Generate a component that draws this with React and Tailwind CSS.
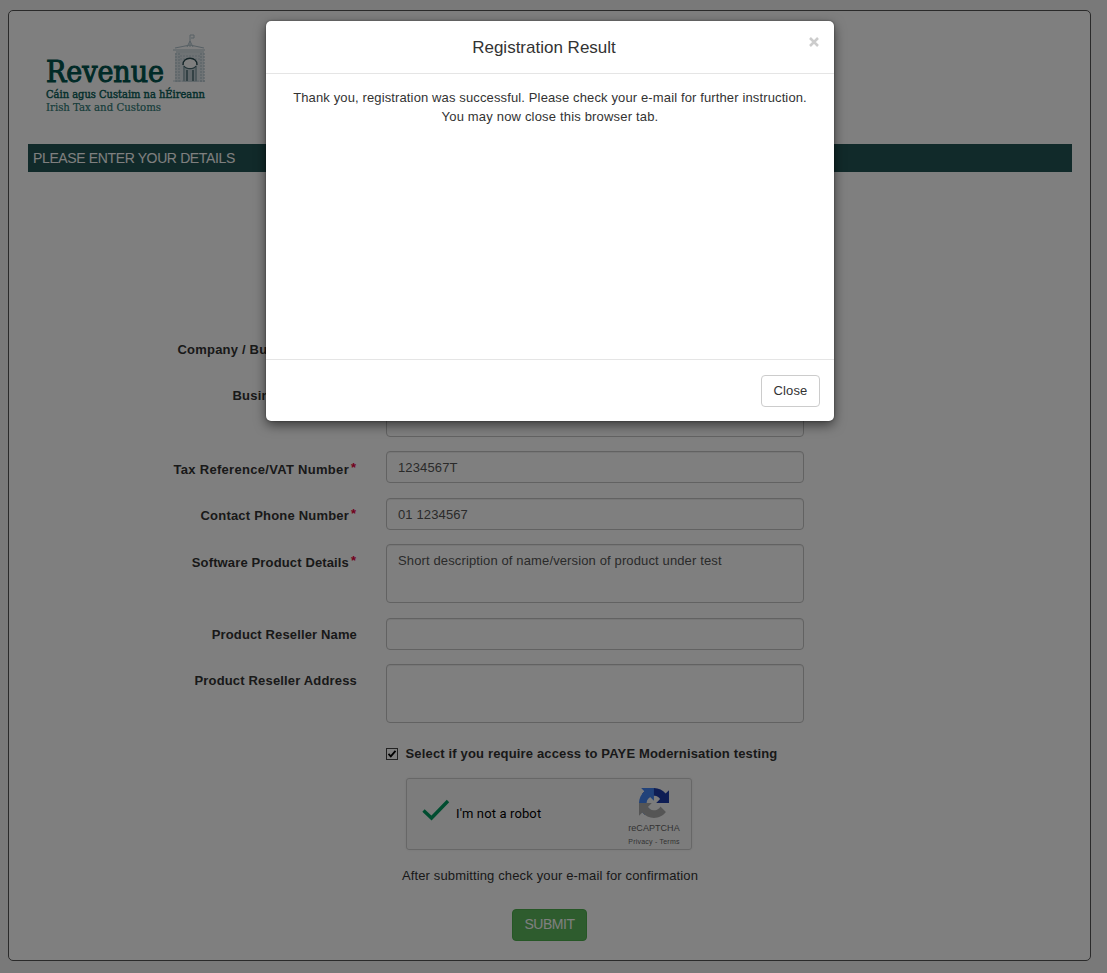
import React from "react";

function Logo() {
  return (
    <svg width="170" height="84" viewBox="0 0 170 84" className="block overflow-visible" aria-label="Revenue">
      <g fontFamily="'DejaVu Serif Condensed', 'DejaVu Serif', serif">
        <text x="0" y="48" fontSize="29" fill="#00554e" stroke="#00554e" strokeWidth="1" textLength="118" lengthAdjust="spacingAndGlyphs">Revenue</text>
        <text x="0" y="64" fontSize="11.5" fill="#0b5f5a" stroke="#0b5f5a" strokeWidth="0.45" textLength="159" lengthAdjust="spacingAndGlyphs">Cáin agus Custaim na hÉireann</text>
        <text x="0" y="77" fontSize="11.5" fill="#2f7a76" stroke="#2f7a76" strokeWidth="0.2" textLength="115" lengthAdjust="spacingAndGlyphs">Irish Tax and Customs</text>
      </g>
      <g fill="none" stroke="#b0c2cb">
        <path d="M129 19h29v29h-29z" fill="#d2dde2" fillOpacity="0.7" stroke="none" />
        <path d="M144 13V1h4v3h-3M141 13l3-6 3 6" />
        <path d="M127 16h32M129 14l15-3 14 3M130 18h28" strokeWidth="1.2" />
        <path d="M130 19v29M133 19v29M155 19v29M158 19v29" strokeDasharray="2 1" strokeWidth="1.1" />
        <path d="M134 22h21M134 25h21M127 47h10M151 47h9" strokeDasharray="2 1" strokeWidth="0.8" />
        <path d="M137 29h14v19h-14z" fill="#c3d0d6" stroke="none" />
        <path d="M138 47V32M150 47V32" stroke="#8ea5ad" strokeWidth="1.4" />
        <path d="M141 47V36M147 47V36" stroke="#5f7d84" strokeWidth="1.8" />
        <ellipse cx="144" cy="29.5" rx="6.5" ry="4.500" fill="#fff" stroke="none" />
        <path d="M137 31c-1-9 15-9 14 0" stroke="#28484f" strokeWidth="1.4" />
        <path d="M138 32c2 3.500 10 3.500 12 0" stroke="#48686f" strokeWidth="1.1" />
      </g>
    </svg>
  );
}

function RecaptchaMark() {
  return (
    <svg width="30" height="30" viewBox="0 0 64 64" className="block">
      <path fill="#1c3aa9" d="M64 31.955l-.033-1.37V4.687l-7.16 7.16C50.948 4.674 42.033.093 32.05.093c-10.4 0-19.622 4.96-25.458 12.64l11.736 11.86a15.55 15.55 0 0 1 4.754-5.334c2.05-1.6 4.952-2.906 8.968-2.906.485 0 .86.057 1.135.163 4.976.393 9.288 3.14 11.828 7.124l-8.307 8.307L64 31.953" />
      <path fill="#4285f4" d="M31.862.094l-1.37.033H4.594l7.16 7.16C4.58 13.147 0 22.06 0 32.046c0 10.4 4.96 19.622 12.64 25.458L24.5 45.768a15.55 15.55 0 0 1-5.334-4.754c-1.6-2.05-2.906-4.952-2.906-8.968 0-.485.057-.86.163-1.135.393-4.976 3.14-9.288 7.124-11.828l8.307 8.307L31.86.095" />
      <path fill="#ababab" d="M.001 32.045l.033 1.37v25.898l7.16-7.16c5.86 7.173 14.774 11.754 24.76 11.754 10.4 0 19.622-4.96 25.458-12.64l-11.736-11.86a15.55 15.55 0 0 1-4.754 5.334c-2.05 1.6-4.952 2.906-8.968 2.906-.485 0-.86-.057-1.135-.163-4.976-.393-9.288-3.14-11.828-7.124l8.307-8.307c-10.522.04-22.4.066-27.295-.005" />
    </svg>
  );
}

function Field({ label, required, value, tall, labelClass = "pt-[8px] tracking-[0.17px]" }) {
  return (
    <div className="flex items-start gap-[29px]">
      <div
        className={
          "flex w-[329px] justify-end whitespace-nowrap text-[13px] font-bold leading-[18px] " +
          labelClass
        }
      >
        {label}
        {required && <span className="-mt-[2px] ml-[2px] w-[6px] text-[#e6003c]">*</span>}
      </div>
      <div
        className={
          "w-[418px] rounded-[4px] border border-[#c4c4c4] px-[11px] py-[6px] text-[13px] leading-[19px] tracking-[0.13px] text-[#555] shadow-[inset_0_1px_1px_rgba(0,0,0,0.075)] " +
          (tall ? "h-[59px]" : "h-8")
        }
      >
        {value}
      </div>
    </div>
  );
}

export default function App() {
  return (
    <div className="relative h-[973px] w-[1107px] overflow-hidden bg-[#f3f3f3] pl-2 pt-[10px] font-['Liberation_Sans',Arial,sans-serif] text-[13px] text-[#333]">
      <main className="flex h-[951px] w-[1083px] flex-col rounded-[5px] border border-[#555] bg-white pl-[19px] pr-[18px]">
        <header className="flex h-[133px] shrink-0 pl-[18px] pt-[23px]">
          <Logo />
        </header>
        <div className="h-7 shrink-0 bg-[#225454] pl-[5px] text-[14px] leading-7 tracking-[-0.37px] text-white">PLEASE ENTER YOUR DETAILS</div>

        <form className="mt-[159.6px] flex flex-col">
          <div className="flex flex-col gap-[14.4px]">
            <Field label="Company / Business Name" required labelClass="pt-[9px] tracking-[0.2px]" />
            <Field label="Business Address" required tall labelClass="pt-[9px] tracking-[0.22px]" />
            <Field label="Tax Reference/VAT Number" required value="1234567T" labelClass="pt-[10px] tracking-[0.3px]" />
            <Field label="Contact Phone Number" required value="01 1234567" labelClass="pt-[9px] tracking-[0.2px]" />
            <Field label="Software Product Details" required tall value="Short description of name/version of product under test" labelClass="pt-[10px] tracking-[0.14px]" />
            <Field label="Product Reseller Name" labelClass="pt-[8px] tracking-[0.14px]" />
            <Field label="Product Reseller Address" tall />
          </div>

          <div className="mt-5 flex h-5 items-center gap-[7.5px] pl-[358px] pt-px font-bold tracking-[0.16px]">
            <svg width="12" height="12" viewBox="0 0 12 12" className="mt-px block">
              <rect x="0.5" y="0.5" width="11" height="11" fill="#fff" stroke="#444" />
              <path d="M2.5 5.8l2.3 2.5 4.7-5.5" fill="none" stroke="#000" strokeWidth="1.8" />
            </svg>
            <span className="mt-px">Select if you require access to PAYE Modernisation testing</span>
          </div>

          <div className="ml-[378px] mt-[15px] flex h-[72px] w-[286px] rounded-[3px] border border-[#cfcfcf] bg-[#f9f9f9] text-black shadow-[0_0_3px_rgba(0,0,0,0.08)]">
            <div className="flex flex-1 items-center pl-[15px]">
              <svg width="28" height="22" viewBox="0 0 28 22" className="-mt-[7px] block">
                <path d="M1.500 11.500l8 7.500L26 2" fill="none" stroke="#009a60" strokeWidth="3.400" />
              </svg>
              <span className="ml-[6px] font-[Roboto,sans-serif] text-[13px] tracking-[0.13px]">I&apos;m not a robot</span>
            </div>
            <div className="flex w-[74px] flex-col items-center pt-[9px] text-[#666]">
              <RecaptchaMark />
              <div className="mt-1 text-[9px] leading-[13px] tracking-[0.05px]">reCAPTCHA</div>
              <div className="whitespace-nowrap text-[7px] leading-[13px] tracking-[0.22px]">Privacy - Terms</div>
            </div>
          </div>

          <p className="mt-4 w-[1044px] text-center leading-[19px] tracking-[0.14px]">After submitting check your e-mail for confirmation</p>
          <div className="mt-6 flex w-[1043px] justify-center">
            <button type="button" className="h-8 w-[75px] rounded-[4px] border border-[#4cae4c] bg-[#5cb85c] text-[14px] tracking-[-0.45px] text-white">SUBMIT</button>
          </div>
        </form>
      </main>

      <div className="absolute inset-0 bg-black/50 pl-[266px] pt-[21px]">
        <section className="flex h-[400px] w-[568px] flex-col rounded-[5px] bg-white shadow-[0_4px_12px_rgba(0,0,0,0.55),0_0_2px_rgba(0,0,0,0.5)]">
          <header className="flex h-[53px] shrink-0 border-b border-[#e5e5e5]">
            <h4 className="flex-1 pl-[14px] pt-4 text-center text-[17px] leading-[21px]">Registration Result</h4>
            <svg width="12" height="12" viewBox="0 0 12 12" className="mr-[14px] mt-[15px] block">
              <path d="M2 2l8 8M10 2l-8 8" stroke="#ccc" strokeWidth="2.5" />
            </svg>
          </header>
          <div className="flex-1 pt-[14px] text-center leading-[19px] tracking-[0.13px]">
            <p>Thank you, registration was successful. Please check your e-mail for further instruction.</p>
            <p className="tracking-[0.18px]">You may now close this browser tab.</p>
          </div>
          <footer className="flex h-[62px] shrink-0 justify-end border-t border-[#e5e5e5] pr-[14px] pt-[15px]">
            <button type="button" className="h-8 w-[59px] rounded-[4px] border border-[#ccc] bg-white text-[13px] tracking-[0.15px]">Close</button>
          </footer>
        </section>
      </div>
    </div>
  );
}
